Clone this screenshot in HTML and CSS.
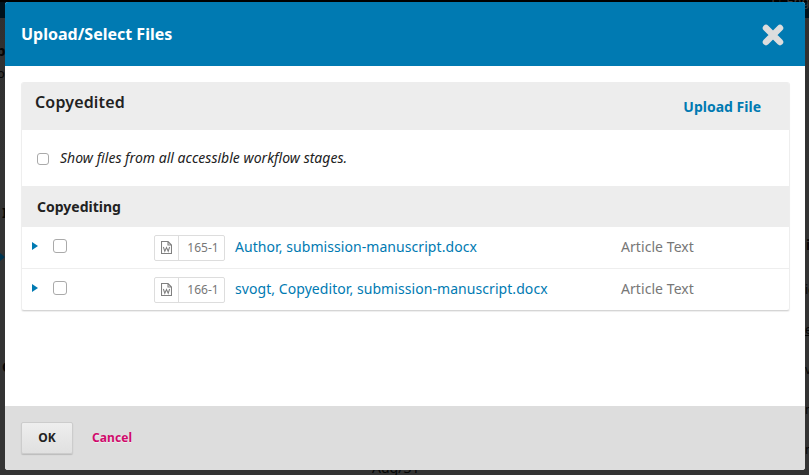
FILE: index.html
```html
<!DOCTYPE html>
<html lang="en">
<head>
<meta charset="utf-8">
<title>Upload/Select Files</title>
<link rel="stylesheet" href="styles.css">
</head>
<body>
<div class="page" aria-hidden="true">
  <div class="topbar"></div>
  <span class="bit b-eng">1↓ Eng</span>
  <span class="bit b-p">p</span>
  <span class="bit b-o">o</span>
  <span class="bit b-l">I</span>
  <span class="bit b-c">C</span>
  <i class="bit-arrow"></i>
  <span class="bit b-i">i</span>
  <span class="bit b-s b-ic">ic</span>
  <span class="bit b-s b-e">e</span>
  <span class="bit b-s b-ve">ve</span>
  <span class="bit b-s b-m">m</span>
  <span class="bit b-s b-ne">ne</span>
  <span class="bit b-aug">Aug/31</span>
</div>
<main class="modal">
  <header class="modal-header">
    <h1>Upload/Select Files</h1>
    <svg class="close" viewBox="0 0 22 22"><path d="M4 4L18 18M18 4L4 18"/></svg>
  </header>
  <div class="modal-body">
    <section class="grid">
      <div class="grid-header">
        <h2>Copyedited</h2>
        <a class="upload">Upload File</a>
      </div>
      <label class="filter"><span class="box small"></span><em>Show files from all accessible workflow stages.</em></label>
      <h3 class="category">Copyediting</h3>
      <div class="row">
        <i class="arrow"></i><span class="box"></span>
        <span class="file-id"><span class="doc"><svg viewBox="0 0 11 13"><path d="M.5 .5h6.500L10.500 4V12.500H.5zM7 .5v3.500H10.500M2.400 6L3.800 10.300L5.500 6.500L7.200 10.300L8.600 6"/></svg></span><span class="num">165-1</span></span>
        <a class="name">Author, submission-manuscript.docx</a>
        <span class="type">Article Text</span>
      </div>
      <div class="row">
        <i class="arrow"></i><span class="box"></span>
        <span class="file-id"><span class="doc"><svg viewBox="0 0 11 13"><path d="M.5 .5h6.500L10.500 4V12.500H.5zM7 .5v3.500H10.500M2.400 6L3.800 10.300L5.500 6.500L7.200 10.300L8.600 6"/></svg></span><span class="num">166-1</span></span>
        <a class="name">svogt, Copyeditor, submission-manuscript.docx</a>
        <span class="type">Article Text</span>
      </div>
    </section>
  </div>
  <footer class="modal-footer">
    <button class="ok">OK</button>
    <a class="cancel">Cancel</a>
  </footer>
</main>
</body>
</html>
```

FILE: styles.css
```css
* { box-sizing: border-box; }
body {
  margin: 0;
  height: 475px;
  padding: 2px 4px 5px 5px;
  overflow: hidden;
  background: #333;
  font-family: "Noto Sans", "Open Sans", sans-serif;
  font-size: 14px;
  line-height: 20px;
  color: #222;
}
h1, h2, h3 { margin: 0; }

/* Dimmed page behind the dialog */
.page { position: absolute; inset: 0; overflow: hidden; background: linear-gradient(#303030, #333 170px); }
.topbar { height: 18px; background: linear-gradient(#000 2px, #00121c 2px); }
.bit { position: absolute; color: #050505; white-space: nowrap; }
.bit-arrow { position: absolute; left: 0; top: 253px; border-left: 5px solid #00344f; border-top: 4px solid transparent; border-bottom: 4px solid transparent; }
.b-eng { left: 769px; top: -9px; font-size: 13px; color: #3a3a3a; }
.b-p { left: -4px; top: 40px; font-size: 15px; font-weight: 700; }
.b-o { left: -3px; top: 63px; font-size: 13px; }
.b-l { left: 2px; top: 203px; font-weight: 700; }
.b-c { left: 2px; top: 357px; font-weight: 700; }
.b-i { left: 806px; top: 235px; font-weight: 700; }
.b-s { left: 805px; font-size: 12px; }
.b-ic { top: 280px; }
.b-e { top: 320px; text-decoration: underline; }
.b-ve { top: 360px; }
.b-m { top: 400px; }
.b-ne { top: 440px; }
.b-aug { left: 372px; top: 458px; }

.modal {
  position: relative;
  display: flex;
  flex-direction: column;
  height: 468px;
  border-radius: 3px;
  overflow: hidden;
  background: #fff;
}
.modal-header {
  display: flex;
  align-items: center;
  justify-content: space-between;
  height: 64px;
  padding: 0 21px 0 16px;
  background: #007ab2;
}
.modal-header h1 { font-size: 16px; line-height: 24px; font-weight: 700; color: #fff; }
.close { width: 22px; height: 22px; margin-top: 1px; fill: none; stroke: #ddd; stroke-width: 6.500; stroke-linecap: round; }
.modal-body { flex: 1; padding: 16px 15px 0 16px; }
.grid {
  border: 1px solid #eee;
  border-top: 0;
  border-bottom-color: #d5d5d5;
  border-radius: 3px;
  overflow: hidden;
  box-shadow: 0 1px 1px #eee;
}
.grid-header {
  display: flex;
  justify-content: space-between;
  height: 48px;
  padding: 10px 28px 0 13px;
  background: #ededed;
}
.grid-header h2 { font-size: 16px; font-weight: 600; letter-spacing: .15px; }
.upload { padding-top: 5px; font-weight: 700; color: #007ab2; }
.filter { display: flex; align-items: center; height: 56px; padding-left: 15px; }
.filter em { margin-left: 11px; letter-spacing: .02px; }
.box { flex: none; width: 14px; height: 14px; border: 1px solid #aaa; border-radius: 3px; background: #fff; }
.box.small { width: 12px; height: 12px; margin-top: 2px; }
.category { height: 41px; padding-left: 15px; background: #ededed; font-size: 14px; line-height: 41px; font-weight: 700; }
.row { display: flex; align-items: center; height: 42px; padding-left: 10px; border-bottom: 1px solid #eee; }
.row:last-child { height: 41px; border-bottom: 0; }
.arrow { border-left: 6px solid #007ab2; border-top: 4px solid transparent; border-bottom: 4px solid transparent; margin: -3px 15px 0 0; }
.row .box { margin: -3px 87px 0 0; }
.file-id { display: flex; width: 71px; height: 26px; margin-right: 10px; border: 1px solid #ddd; border-radius: 2px; color: #777; }
.doc { display: flex; align-items: center; justify-content: center; width: 24px; border-right: 1px solid #ddd; }
.doc svg { width: 11px; height: 13px; fill: none; stroke: #808080; stroke-width: 1.100; }
.num { flex: 1; padding-left: 3px; text-align: center; font-size: 12px; line-height: 24px; }
.name { width: 386px; color: #007ab2; letter-spacing: .065px; white-space: nowrap; margin-top: -1px; }
.type { color: #777; letter-spacing: .065px; margin-top: -1px; }

.modal-footer { display: flex; align-items: center; height: 64px; padding-left: 16px; background: #ddd; font-size: 12px; }
.ok {
  width: 52px;
  height: 32px;
  padding: 0;
  border: 1px solid #ccc;
  border-radius: 2px;
  background: linear-gradient(#eee, #e0e0e0);
  box-shadow: 0 1px 1px #bbb;
  font: 700 12px/30px "Noto Sans", sans-serif;
  color: #222;
}
.cancel { margin-left: 19px; font-weight: 700; letter-spacing: .1px; color: #d00a6c; text-shadow: 0 1px 0 #eee; }
```
